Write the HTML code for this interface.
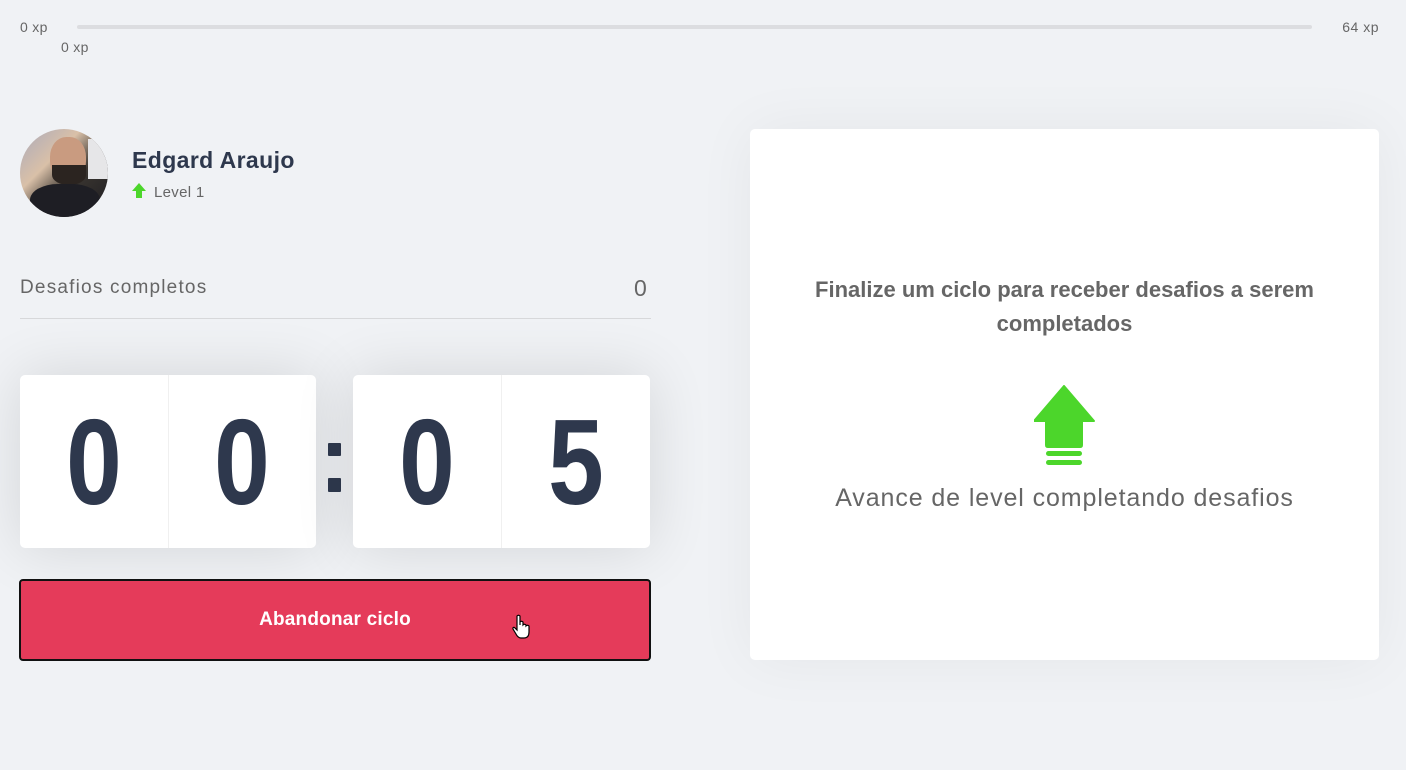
<!DOCTYPE html>
<html><head><meta charset="utf-8"><style>
*{margin:0;padding:0;box-sizing:border-box}
body{width:1406px;height:770px;background:#f0f2f5;font-family:"Liberation Sans",sans-serif;position:relative;overflow:hidden;color:#666}
.abs{position:absolute}
.card{position:absolute;background:#fff;border-radius:5px;box-shadow:0 0 60px rgba(0,0,0,0.12);display:flex}
.card div{flex:1;display:flex;align-items:center;justify-content:center;font-size:122px;font-weight:bold;color:#2e384d;line-height:1}
.card div span{display:inline-block;transform:scaleX(0.82)}
.card div:first-child{border-right:1px solid #f0f0f0}
</style></head><body>
<div class="abs" style="left:20px;top:19px;font-size:14px;color:#666;letter-spacing:0.3px">0 xp</div>
<div class="abs" style="left:77px;top:25px;width:1235px;height:4px;border-radius:2px;background:#dcdde0"></div>
<div class="abs" style="left:61px;top:39px;font-size:14px;color:#666;letter-spacing:0.3px">0 xp</div>
<div class="abs" style="right:27px;top:19px;font-size:14px;color:#666;letter-spacing:0.5px">64 xp</div>

<div class="abs" style="left:20px;top:129px;width:88px;height:88px;border-radius:50%;overflow:hidden;background:linear-gradient(135deg,#aab 0%,#d9c0a8 35%,#3a3530 60%,#1d1d22 100%)">
<div class="abs" style="left:30px;top:8px;width:36px;height:44px;border-radius:45%;background:#c99b80"></div>
<div class="abs" style="left:32px;top:36px;width:34px;height:20px;border-radius:0 0 50% 50%;background:#2b2420"></div>
<div class="abs" style="left:10px;top:55px;width:70px;height:40px;border-radius:40% 40% 0 0;background:#1e1e24"></div>
<div class="abs" style="left:68px;top:10px;width:20px;height:40px;background:#e6e6e8"></div>
</div>
<div class="abs" style="left:132px;top:147px;font-size:23px;font-weight:bold;color:#2e384d;letter-spacing:0.4px">Edgard Araujo</div>
<svg class="abs" style="left:132px;top:183px" width="14" height="16" viewBox="0 0 14 16"><path d="M7 0L14 8H10V15H4V8H0Z" fill="#4cd62b"/></svg>
<div class="abs" style="left:154px;top:184px;font-size:15px;color:#666;letter-spacing:0.3px">Level 1</div>

<div class="abs" style="left:20px;top:277px;font-size:19px;color:#666;letter-spacing:1.2px">Desafios completos</div>
<div class="abs" style="left:634px;top:275px;font-size:23px;color:#666">0</div>
<div class="abs" style="left:20px;top:318px;width:631px;height:1px;background:#d7d8da"></div>

<div class="card" style="left:20px;top:375px;width:296px;height:173px"><div><span>0</span></div><div><span>0</span></div></div>
<div class="abs" style="left:328px;top:443px;width:13px;height:13px;background:#2e384d;border-radius:1px"></div>
<div class="abs" style="left:328px;top:478px;width:13px;height:14px;background:#2e384d;border-radius:1px"></div>
<div class="card" style="left:353px;top:375px;width:297px;height:173px"><div><span>0</span></div><div><span>5</span></div></div>

<div class="abs" style="left:19px;top:579px;width:632px;height:82px;background:#e53b5a;border:2px solid #111;border-radius:4px;display:flex;align-items:center;justify-content:center;color:#fff;font-weight:bold;font-size:19px;letter-spacing:0.2px">Abandonar ciclo</div>
<svg class="abs" style="left:511px;top:614px" width="20" height="26" viewBox="0 0 20 26"><path d="M6 2Q7.5 0.5 9 2V11L9 8Q10.5 6.5 12 8V11Q13.5 9.5 15 11V12Q16.5 10.5 18 12V18Q18 24 13 24H10Q7 24 5 20L2 15Q1.5 13 3.5 13.5L6 16Z" fill="#fff" stroke="#000" stroke-width="1.2"/></svg>

<div class="abs" style="left:750px;top:129px;width:629px;height:531px;background:#fff;border-radius:5px;box-shadow:0 0 60px rgba(0,0,0,0.05)"></div>
<div class="abs" style="left:760px;top:273px;width:609px;text-align:center;font-size:22px;font-weight:bold;color:#666;line-height:34px">Finalize um ciclo para receber desafios a serem completados</div>
<svg class="abs" style="left:1034px;top:385px" width="62" height="82" viewBox="0 0 62 82"><path d="M30 1L60 36H48V60Q48 62 46 62H14Q12 62 12 60V36H0Z" fill="#4cd62b" stroke="#4cd62b" stroke-linejoin="round" stroke-width="2"/><rect x="12" y="66" width="36" height="5" rx="2.5" fill="#4cd62b"/><rect x="12" y="75" width="36" height="5" rx="2.5" fill="#4cd62b"/></svg>
<div class="abs" style="left:760px;top:484px;width:609px;text-align:center;font-size:25px;color:#666;letter-spacing:0.9px">Avance de level completando desafios</div>
</body></html>
